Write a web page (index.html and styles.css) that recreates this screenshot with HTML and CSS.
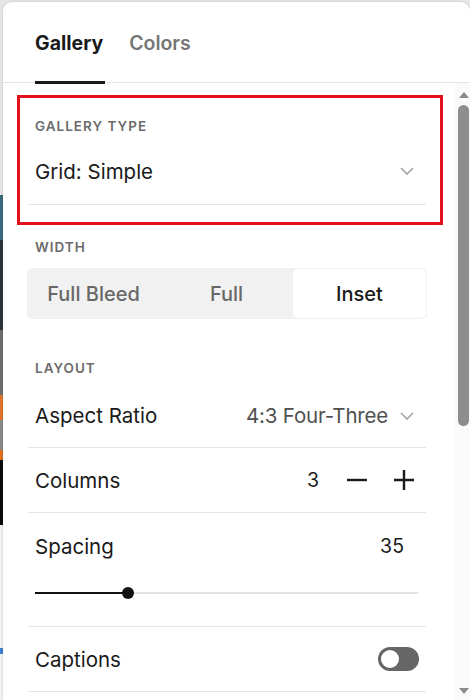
FILE: index.html
```html
<!DOCTYPE html>
<html>
<head>
<meta charset="utf-8">
<link rel="stylesheet" href="styles.css">
</head>
<body>
<div class="page">
  <div class="backdrop">
    <div class="bd bd-light"></div>
    <div class="bd bd-blue"></div>
    <div class="bd bd-dark"></div>
    <div class="bd bd-gray"></div>
    <div class="bd bd-orange"></div>
    <div class="bd bd-pale"></div>
    <div class="bd bd-orange2"></div>
    <div class="bd bd-black"></div>
    <div class="bd bd-white"></div>
    <div class="bd bd-dot"></div>
    <div class="bd bd-rest"></div>
  </div>
  <div class="panel">
    <div class="tabs">
      <div class="tab active">Gallery</div>
      <div class="tab">Colors</div>
    </div>
    <div class="scroll">
      <div class="content">
        <section class="section highlighted">
          <div class="label first">Gallery Type</div>
          <div class="row select-row">
            <span class="row-title">Grid: Simple</span>
            <svg class="chev" width="14" height="8" viewBox="0 0 14 8"><path d="M1 1l6 6 6-6" fill="none" stroke="#a3a3a3" stroke-width="1.6"/></svg>
          </div>
        </section>
        <div class="label width-label">Width</div>
        <div class="segmented">
          <div class="seg">Full Bleed</div>
          <div class="seg">Full</div>
          <div class="seg selected">Inset</div>
        </div>
        <div class="label layout-label">Layout</div>
        <div class="row">
          <span class="row-title">Aspect Ratio</span>
          <span class="value">4:3 Four-Three
            <svg class="chev small" width="14" height="8" viewBox="0 0 14 8"><path d="M1 1l6 6 6-6" fill="none" stroke="#a3a3a3" stroke-width="1.6"/></svg>
          </span>
        </div>
        <div class="row">
          <span class="row-title">Columns</span>
          <span class="stepper">
            <span class="num">3</span>
            <svg width="20" height="20" viewBox="0 0 20 20"><path d="M0 10h20" stroke="#1a1a1a" stroke-width="2.4"/></svg>
            <svg width="20" height="20" viewBox="0 0 20 20"><path d="M0 10h20M10 0v20" stroke="#1a1a1a" stroke-width="2.4"/></svg>
          </span>
        </div>
        <div class="slider-block">
          <div class="slider-head">
            <span class="row-title">Spacing</span>
            <span class="num">35</span>
          </div>
          <div class="track">
            <div class="fill" style="width: 24%"></div>
            <div class="knob"></div>
          </div>
        </div>
        <div class="row">
          <span class="row-title">Captions</span>
          <span class="toggle"><span class="toggle-knob"></span></span>
        </div>
      </div>
      <div class="scrollbar">
        <svg class="arrow" width="10" height="6" viewBox="0 0 10 6"><path d="M0 6L5 0L10 6Z" fill="#8a8a8a"/></svg>
        <div class="thumb"></div>
        <div class="spacer"></div>
        <svg class="arrow" width="10" height="6" viewBox="0 0 10 6"><path d="M0 0L5 6L10 0Z" fill="#8a8a8a"/></svg>
      </div>
    </div>
  </div>
</div>
</body>
</html>
```
FILE: styles.css
```css
* { box-sizing: border-box; }
html, body { margin: 0; padding: 0; }
body {
  width: 470px;
  height: 700px;
  overflow: hidden;
  background: #e8e8e8;
  font-family: Inter, "Noto Sans", sans-serif;
  color: #1a1a1a;
}
.page {
  display: flex;
  height: 700px;
}
.backdrop {
  width: 3px;
  display: flex;
  flex-direction: column;
}
.bd { flex: none; }
.bd-light { height: 195px; background: #e6e6e6; }
.bd-blue { height: 45px; background: #3d6a80; }
.bd-dark { height: 90px; background: #2b3537; }
.bd-gray { height: 65px; background: #6e6e6e; }
.bd-orange { height: 25px; background: #e0752a; }
.bd-pale { height: 30px; background: #8a8a8a; }
.bd-orange2 { height: 10px; background: #e07020; }
.bd-black { height: 65px; background: #0c0c0c; }
.bd-white { height: 123px; background: #f2f2f2; }
.bd-dot { height: 6px; background: #3a82cf; }
.bd-rest { flex: 1; background: #f2f2f2; }

.panel {
  flex: 1;
  margin-top: 2px;
  background: #fff;
  border-radius: 9px 9px 0 0;
  box-shadow: 0 0 3px rgba(0,0,0,0.18);
  display: flex;
  flex-direction: column;
  overflow: hidden;
  position: relative;
}
.tabs {
  height: 81px;
  border-bottom: 1px solid #e4e4e4;
  display: flex;
  gap: 24px;
  padding-left: 32px;
  flex: none;
}
.tab {
  font-size: 19.5px;
  font-weight: 600;
  color: #767676;
  padding-top: 29px;
  line-height: 24px;
}
.tab.active {
  color: #1a1a1a;
  font-weight: 700;
  border-bottom: 3px solid #1a1a1a;
  margin-bottom: -2px;
  padding-right: 2px;
}
.scroll {
  flex: 1;
  display: flex;
  min-height: 0;
}
.content {
  flex: 1;
  padding-left: 25px;
  padding-right: 29px;
  display: flex;
  flex-direction: column;
}
.section { position: relative; }
.highlighted::after {
  content: "";
  position: absolute;
  left: -11px;
  right: -17px;
  top: 12px;
  bottom: -20px;
  border: 3px solid #e3111b;
  pointer-events: none;
}
.label {
  font-size: 13.5px;
  font-weight: 600;
  text-transform: uppercase;
  letter-spacing: 1px;
  color: #6b6b6b;
  line-height: 16px;
  padding-left: 7px;
  flex: none;
}
.label.first { margin-top: 35px; }
.width-label { margin-top: 34px; }
.layout-label { margin-top: 41px; margin-bottom: 7px; }
.row {
  height: 65px;
  border-bottom: 1px solid #e4e4e4;
  display: flex;
  align-items: center;
  justify-content: space-between;
  padding: 0 12px 0 7px;
  flex: none;
}
.select-row {
  height: 71px;
}
.select-row .row-title { margin-top: 4px; }
.row-title {
  font-size: 20.5px;
  font-weight: 400;
  color: #1a1a1a;
}
.select-row .chev { margin-top: 4px; }
.value {
  font-size: 20.5px;
  color: #505050;
  display: flex;
  align-items: center;
  gap: 12px;
  letter-spacing: -0.2px;
}
.chev.small { margin-top: 2px; }
.segmented {
  margin-top: 13px;
  height: 51px;
  background: #f1f1f1;
  border-radius: 5px;
  display: grid;
  grid-template-columns: 133px 133px 1fr;
  margin-left: -1px;
  margin-right: -1px;
  flex: none;
}
.seg {
  display: flex;
  align-items: center;
  justify-content: center;
  font-size: 20px;
  font-weight: 500;
  color: #686868;
}
.seg.selected {
  background: #fff;
  color: #1a1a1a;
  border-radius: 5px;
  margin: 1px 1px 1px 0;
}
.stepper {
  display: flex;
  align-items: center;
}
.stepper .num { margin-right: 28px; }
.stepper svg + svg { margin-left: 27px; }
.num {
  font-size: 19.5px;
  color: #1a1a1a;
}
.slider-block {
  height: 114px;
  border-bottom: 1px solid #e4e4e4;
  padding: 21px 8px 0 7px;
  flex: none;
}
.slider-head {
  display: flex;
  justify-content: space-between;
  align-items: center;
  height: 24px;
  padding-right: 14px;
}
.track {
  margin-top: 34px;
  height: 2px;
  background: #e2e2e2;
  position: relative;
}
.fill {
  height: 2px;
  background: #111;
}
.knob {
  position: absolute;
  left: calc(24% - 5px);
  top: -5px;
  width: 12px;
  height: 12px;
  border-radius: 50%;
  background: #111;
}
.toggle {
  width: 41px;
  height: 24px;
  border-radius: 12px;
  background: #666;
  display: flex;
  align-items: center;
  padding-left: 3px;
  margin-right: -5px;
}
.toggle-knob {
  width: 18px;
  height: 18px;
  border-radius: 50%;
  background: #fff;
}
.scrollbar {
  width: 15px;
  flex: none;
  background: #fafafa;
  display: flex;
  flex-direction: column;
  align-items: center;
  padding: 9px 0 6px 2px;
}
.arrow { flex: none; }
.thumb {
  width: 11px;
  height: 321px;
  margin-top: 7px;
  border-radius: 6px;
  background: #8d8d8d;
  flex: none;
}
.spacer { flex: 1; }
```
